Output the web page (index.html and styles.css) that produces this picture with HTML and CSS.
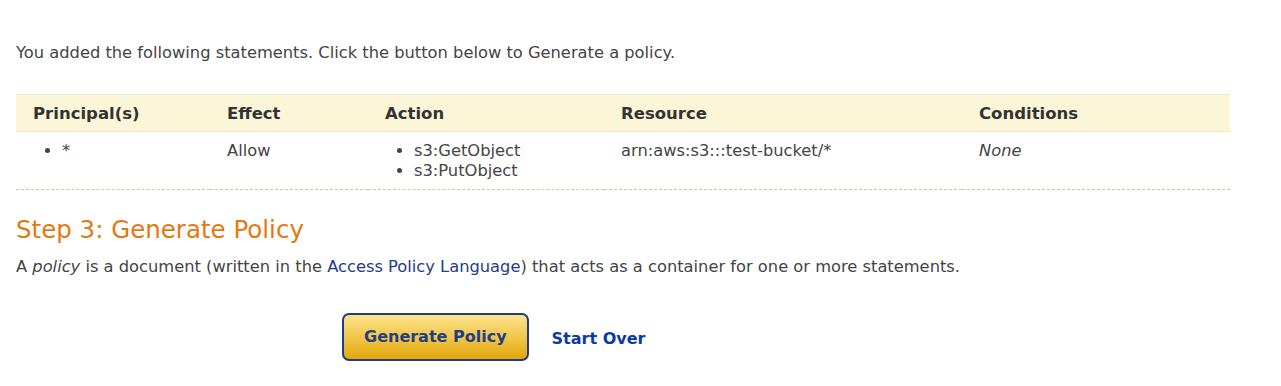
FILE: index.html
```html
<!DOCTYPE html>
<html lang="en">
<head>
    <meta charset="UTF-8">
    <title>Policy Generator</title>
    <link rel="stylesheet" href="styles.css">
</head>
<body>
    <div class="page">
        <p class="intro">You added the following statements. Click the button below to Generate a policy.</p>

        <table class="statements">
            <thead>
                <tr>
                    <th class="col-principal">Principal(s)</th>
                    <th class="col-effect">Effect</th>
                    <th class="col-action">Action</th>
                    <th class="col-resource">Resource</th>
                    <th class="col-conditions">Conditions</th>
                </tr>
            </thead>
            <tbody>
                <tr>
                    <td><ul><li>*</li></ul></td>
                    <td>Allow</td>
                    <td><ul><li>s3:GetObject</li><li>s3:PutObject</li></ul></td>
                    <td>arn:aws:s3:::test-bucket/*</td>
                    <td><em>None</em></td>
                </tr>
            </tbody>
        </table>

        <h2 class="step-title">Step 3: Generate Policy</h2>
        <p class="step-desc">A <em>policy</em> is a document (written in the <a href="#">Access Policy Language</a>) that acts as a container for one or more statements.</p>

        <div class="actions">
            <button class="generate-btn" type="button">Generate Policy</button>
            <a class="start-over" href="#">Start Over</a>
        </div>
    </div>
</body>
</html>
```

FILE: styles.css
```css
body {
    margin: 0;
    font-family: "DejaVu Sans", Verdana, sans-serif;
    font-size: 16.3px;
    color: #444;
    background: #fff;
}

.page {
    padding: 0 16px;
}

.intro {
    margin: 0;
    padding-top: 44px;
    line-height: 18px;
}

.statements {
    width: 1214px;
    margin-top: 32px;
    border-collapse: collapse;
}

.statements th {
    text-align: left;
    font-size: 16.5px;
    font-weight: bold;
    color: #333;
    background-color: #faf6d7;
    border-top: 1px solid #efebc8;
    border-bottom: 1px solid #efebc8;
    padding: 9px 0 8px 17px;
    height: 19px;
}

.col-principal { width: 177px; }
.col-effect { width: 141px; }
.col-action { width: 219px; }
.col-resource { width: 341px; }

.statements td {
    vertical-align: top;
    padding: 9px 0 8px 17px;
    line-height: 20px;
    border-bottom: 1px dashed #c9cc9c;
    height: 30px;
}

.statements ul {
    margin: 0;
    padding-left: 29px;
}

.statements td em {
    font-style: italic;
}

.step-title {
    margin: 25px 0 0;
    font-size: 24.5px;
    font-weight: normal;
    color: #e47911;
    line-height: 30px;
}

.step-desc {
    margin: 12px 0 0;
    line-height: 20px;
}

.step-desc a {
    color: #1f3c88;
    text-decoration: none;
}

.actions {
    display: flex;
    align-items: center;
    gap: 23px;
    margin-top: 36px;
    padding-left: 326px;
}

.generate-btn {
    font-family: inherit;
    font-size: 16px;
    font-weight: bold;
    color: #233d84;
    padding: 0 20px 1px;
    height: 48px;
    border: 2px solid #203c87;
    border-radius: 7px;
    background: linear-gradient(to bottom, #fde48c, #e3a80a);
    cursor: pointer;
}

.start-over {
    font-size: 16px;
    font-weight: bold;
    color: #0a3aa8;
    text-decoration: none;
    padding-top: 2px;
}
```
